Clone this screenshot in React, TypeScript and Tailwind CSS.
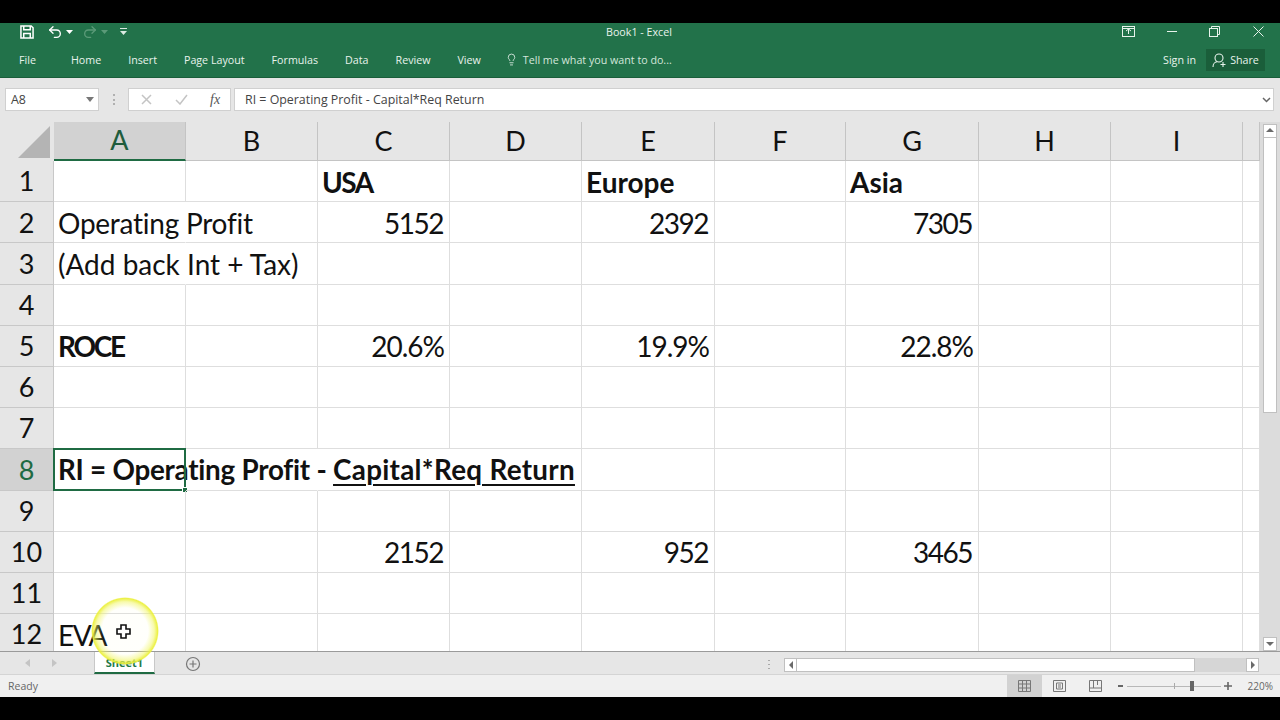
import { Lightbulb, Redo2, Undo2 } from 'lucide-react';

const colonne = [
  { nome: 'A', w: 'w-[132px]' },
  { nome: 'B', w: 'w-[132px]' },
  { nome: 'C', w: 'w-[132px]' },
  { nome: 'D', w: 'w-[132px]' },
  { nome: 'E', w: 'w-[133px]' },
  { nome: 'F', w: 'w-[131px]' },
  { nome: 'G', w: 'w-[133px]' },
  { nome: 'H', w: 'w-[132px]' },
  { nome: 'I', w: 'w-[132px]' },
  { nome: '', w: 'w-[17px]' },
];

type Cella = { t?: string; bold?: boolean; right?: boolean; cls?: string };

const num = 'tracking-[-1.5px] pr-[6px]';
const perc = 'tracking-[-1px] pr-[5px]';

const dati: Record<number, Record<number, Cella>> = {
  1: { 2: { t: 'USA', bold: true, cls: 'tracking-[-1.5px]' }, 4: { t: 'Europe', bold: true }, 6: { t: 'Asia', bold: true } },
  2: {
    0: { t: 'Operating Profit', cls: 'border-r-transparent tracking-[-0.25px] pl-[3px]' },
    2: { t: '5152', right: true, cls: num },
    4: { t: '2392', right: true, cls: num },
    6: { t: '7305', right: true, cls: num },
  },
  3: { 0: { t: '(Add back Int + Tax)', cls: 'border-r-transparent' } },
  5: {
    0: { t: 'ROCE', bold: true, cls: 'tracking-[-2.3px]' },
    2: { t: '20.6%', right: true, cls: perc },
    4: { t: '19.9%', right: true, cls: perc },
    6: { t: '22.8%', right: true, cls: perc },
  },
  8: { 1: { cls: 'border-r-transparent' }, 2: { cls: 'border-r-transparent' } },
  10: {
    2: { t: '2152', right: true, cls: num },
    4: { t: '952', right: true, cls: num },
    6: { t: '3465', right: true, cls: num },
  },
  12: { 0: { t: 'EVA', cls: 'tracking-[-1.5px] pl-[3px]' } },
};

const righe = [1, 2, 3, 4, 5, 6, 7, 8, 9, 10, 11, 12];
const tabs = ['Home', 'Insert', 'Page Layout', 'Formulas', 'Data', 'Review', 'View'];

const Triangolo = ({ dir }: { dir: 'up' | 'down' | 'left' | 'right' }) => {
  const punti = { up: '1,6 5,2 9,6', down: '1,3 5,7 9,3', left: '7,1 3,5 7,9', right: '3,1 7,5 3,9' }[dir];
  return (
    <svg width="10" height="10" viewBox="0 0 10 10" fill="#6a6a6a">
      <polygon points={punti} />
    </svg>
  );
};

const BarraTitolo = () => (
  <div className="flex h-[22px] items-start text-[#e8f3ec]">
    <div className="flex w-[606px] items-center pl-[20px] pt-[1px]">
      <svg width="14" height="14" viewBox="0 0 15 15" fill="none" stroke="#fff" strokeWidth="1.6">
        <path d="M1 1h11l2 2v11H1z" />
        <path d="M4 1v4h7V1M4 14V9h7v5" />
      </svg>
      <Undo2 size={16} strokeWidth={2} className="ml-[13px] text-white" />
      <svg width="7" height="4" viewBox="0 0 7 4" fill="#fff" className="ml-[3px]"><polygon points="0,0 7,0 3.5,4" /></svg>
      <Redo2 size={16} strokeWidth={2} className="ml-[9px] text-[#5b9a78]" />
      <svg width="7" height="4" viewBox="0 0 7 4" fill="#5b9a78" className="ml-[3px]"><polygon points="0,0 7,0 3.5,4" /></svg>
      <svg width="7" height="8" viewBox="0 0 7 8" fill="#dcebe2" className="ml-[12px]">
        <rect x="0" y="0" width="7" height="1" />
        <polygon points="0,3 7,3 3.5,7" />
      </svg>
    </div>
    <span className="pt-[2px] text-[10.7px] leading-[15px]">Book1 - Excel</span>
    <div className="ml-auto flex items-center pt-[3px]">
      <svg width="13" height="11" viewBox="0 0 13 11" fill="none" stroke="#e8f3ec" strokeWidth="1" className="mr-[32px]">
        <rect x="0.5" y="0.5" width="12" height="10" />
        <path d="M0.5 2.5h12M4 5l2.5-2L9 5M6.5 3v5" />
      </svg>
      <div className="mr-[32px] h-[1px] w-[10px] bg-[#e8f3ec]" />
      <svg width="11" height="11" viewBox="0 0 11 11" fill="none" stroke="#e8f3ec" strokeWidth="1" className="mr-[33px]">
        <rect x="0.5" y="2.5" width="8" height="8" />
        <path d="M2.5 2.5v-2h8v8h-2" />
      </svg>
      <svg width="11" height="11" viewBox="0 0 11 11" stroke="#e8f3ec" strokeWidth="1" className="mr-[16px]">
        <path d="M0.5 0.5l10 10M10.5 0.5l-10 10" />
      </svg>
    </div>
  </div>
);

const BarraTab = () => (
  <div className="flex h-[33px] items-start text-[10.7px] text-[#e8f3ec]">
    <span className="ml-[19px] mt-[7px] leading-[17px]">File</span>
    <div className="ml-[35px] mt-[7px] flex gap-[27px] leading-[16px]">
      {tabs.map(t => <span key={t}>{t}</span>)}
    </div>
    <Lightbulb size={13} strokeWidth={1.5} className="ml-[24px] mt-[8px]" />
    <span className="ml-[5px] mt-[7px] leading-[16px] text-[#d3e6db]">Tell me what you want to do...</span>
    <div className="ml-auto mr-[15px] mt-[4px] flex items-center">
      <span className="mr-[10px] leading-[16px]">Sign in</span>
      <div className="flex h-[22px] w-[59px] items-center justify-center gap-[3px] bg-[#1a5e3a]">
        <svg width="15" height="15" viewBox="0 0 15 15" fill="none" stroke="#e8f3ec" strokeWidth="1.1">
          <circle cx="7" cy="5" r="4" />
          <path d="M1 14c0-3 2-5 4-5.2M11 9v5M8.5 11.5h5" />
        </svg>
        <span>Share</span>
      </div>
    </div>
  </div>
);

const BarraFormula = () => (
  <div className="flex h-[44px] items-start bg-[#e6e6e6] pt-[10px] text-[12.4px] text-[#444]">
    <div className="ml-[5px] flex h-[23px] w-[94px] items-center justify-between border border-[#d0d0d0] bg-white pl-[5px] pr-[4px]">
      <span className="mt-[2px]">A8</span>
      <svg width="8" height="5" viewBox="0 0 8 5" fill="#777"><polygon points="0,0 8,0 4,5" /></svg>
    </div>
    <div className="ml-[14px] mt-[6px] flex h-[11px] w-[2px] flex-col justify-between">
      <div className="h-[2px] bg-[#b0b0b0]" />
      <div className="h-[2px] bg-[#b0b0b0]" />
      <div className="h-[2px] bg-[#b0b0b0]" />
    </div>
    <div className="ml-[13px] flex h-[23px] w-[103px] items-center border border-[#d0d0d0] bg-white pl-[12px]">
      <svg width="11" height="11" viewBox="0 0 11 11" stroke="#c4c4c4" strokeWidth="1.5"><path d="M1 1l9 9M10 1l-9 9" /></svg>
      <svg width="13" height="11" viewBox="0 0 13 11" fill="none" stroke="#c4c4c4" strokeWidth="1.5" className="ml-[23px]"><path d="M1 6l4 4 7-9" /></svg>
      <span className="ml-[22px] font-['Liberation_Serif',serif] text-[14px] italic text-[#555]">fx</span>
    </div>
    <div className="ml-[3px] flex h-[23px] w-[1040px] items-center justify-between border border-[#d0d0d0] bg-white pl-[10px] pr-[2px]">
      <span className="mt-[2px]">RI = Operating Profit - Capital*Req Return</span>
      <svg width="9" height="6" viewBox="0 0 9 6" fill="none" stroke="#666" strokeWidth="1.5"><path d="M1 1l3.5 3.5L8 1" /></svg>
    </div>
  </div>
);

const Intestazione = () => (
  <div className="flex h-[39px] font-['Lato',sans-serif] text-[27px] text-[#111]">
    <div className="flex w-[54px] shrink-0 items-end">
      <svg width="50" height="35" viewBox="0 0 50 35" fill="#b4b4b4" className="mb-[3px]"><polygon points="18,35 50,3 50,35" /></svg>
    </div>
    {colonne.map(c => (
      <div
        key={c.nome || 'fine'}
        className={`flex shrink-0 items-center justify-center border-r border-[#c4c4c4] ${c.w} ${c.nome === 'A' ? 'border-b-2 border-b-[#1f6b43] bg-[#d2d2d2] text-[#1f5c3c]' : 'border-b border-b-[#c4c4c4]'}`}
      >
        {c.nome}
      </div>
    ))}
  </div>
);

const Riga = ({ n }: { n: number }) => {
  const sel = n === 8;
  return (
    <div className="flex h-[41.2px] shrink-0">
      <div className={`flex w-[54px] shrink-0 items-center justify-center border-b border-r border-[#c8c8c8] pt-[1px] text-[27px] ${sel ? 'bg-[#d2d2d2] text-[#1f6b43]' : 'bg-[#e6e6e6] text-[#111]'}`}>
        {n}
      </div>
      {colonne.map((c, i) => {
        const cella = dati[n]?.[i];
        return (
          <div
            key={i}
            className={`relative flex shrink-0 items-center whitespace-nowrap border-b border-r border-[#dedede] bg-transparent pl-[4px] pr-[4px] pt-[1px] ${c.w} ${cella?.right ? 'justify-end' : ''} ${cella?.bold ? 'font-bold' : ''} ${cella?.cls ?? ''}`}
          >
            {cella?.t}
            {sel && i === 0 && (
              <>
                <span className="whitespace-pre text-[27.8px] font-bold">
                  <span className="tracking-[-0.25px]">RI = Operating Profit - </span>
                  <span className="tracking-[0.3px] underline decoration-2 underline-offset-4">Capital*Req Return</span>
                </span>
                <div className="absolute inset-[-1px] border-2 border-[#1f6b43]" />
                <div className="absolute bottom-[-3px] right-[-3px] h-[6px] w-[6px] border border-white bg-[#1f6b43]" />
              </>
            )}
          </div>
        );
      })}
    </div>
  );
};

const ScrollVerticale = () => (
  <div className="flex w-[20px] shrink-0 flex-col items-center bg-[#dcdcdc] pt-[2px]">
    <div className="flex h-[14px] w-[14px] items-center justify-center border border-[#c0c0c0] bg-white"><Triangolo dir="up" /></div>
    <div className="h-[275px] w-[14px] border-x border-b border-[#c0c0c0] bg-white" />
    <div className="mt-auto flex h-[14px] w-[14px] items-center justify-center border border-[#c0c0c0] bg-white"><Triangolo dir="down" /></div>
  </div>
);

const BarraFogli = () => (
  <div className="flex h-[22px] items-start bg-[#e6e6e6]">
    <div className="flex w-[94px] items-center gap-[22px] pl-[25px] pt-[7px]">
      <svg width="5" height="8" viewBox="0 0 5 8" fill="#c4c4c4"><polygon points="5,0 0,4 5,8" /></svg>
      <svg width="5" height="8" viewBox="0 0 5 8" fill="#c4c4c4"><polygon points="0,0 5,4 0,8" /></svg>
    </div>
    <div className="flex h-[22px] w-[61px] items-center justify-center border-x border-b-2 border-x-[#c8c8c8] border-b-[#1f6b43] bg-white pt-[2px] text-[11px] font-bold text-[#1f7a49]">
      Sheet1
    </div>
    <svg width="16" height="16" viewBox="0 0 16 16" fill="none" stroke="#777" strokeWidth="1.2" className="ml-[30px] mt-[4px]">
      <circle cx="8" cy="8" r="6.5" />
      <path d="M8 4.5v7M4.5 8h7" />
    </svg>
    <div className="ml-[567px] mt-[8px] flex h-[9px] w-[2px] flex-col justify-between">
      <div className="h-[1px] bg-[#aaa]" />
      <div className="h-[1px] bg-[#aaa]" />
      <div className="h-[1px] bg-[#aaa]" />
    </div>
    <div className="ml-[14px] mt-[6px] flex h-[14px] w-[475px] bg-[#d6d6d6]">
      <div className="flex w-[13px] items-center justify-center border border-[#c0c0c0] bg-white"><Triangolo dir="left" /></div>
      <div className="w-[398px] border-y border-r border-[#c0c0c0] bg-white" />
      <div className="flex-1" />
      <div className="flex w-[13px] items-center justify-center border border-[#c0c0c0] bg-white"><Triangolo dir="right" /></div>
    </div>
  </div>
);

const BarraStato = () => (
  <div className="flex h-[23px] items-center border-t border-[#d4d4d4] bg-[#f0f0f0] text-[10.5px] text-[#666]">
    <span className="ml-[8px] mt-[2px]">Ready</span>
    <div className="ml-auto flex h-full items-center">
      <div className="flex h-full w-[35px] items-center justify-center bg-[#d2d2d2]">
        <svg width="13" height="12" viewBox="0 0 13 12" fill="none" stroke="#777" strokeWidth="1">
          <path d="M.5.5h12v11H.5zM.5 4h12M.5 8h12M4.5.5v11M8.5.5v11" />
        </svg>
      </div>
      <svg width="13" height="12" viewBox="0 0 13 12" fill="none" stroke="#777" strokeWidth="1" className="ml-[11px]">
        <path d="M.5.5h12v11H.5zM3.5 3h6v6h-6zM5 5h3M5 7h3" />
      </svg>
      <svg width="13" height="12" viewBox="0 0 13 12" fill="none" stroke="#777" strokeWidth="1" className="ml-[23px]">
        <path d="M.5.5h12v11H.5zM.5 8h12M4.5.5V8M8.5.5V5" />
      </svg>
      <div className="ml-[16px] h-[2px] w-[5px] bg-[#666]" />
      <div className="relative ml-[4px] flex h-[1px] w-[94px] items-center bg-[#b8b8b8]">
        <div className="absolute left-[47px] h-[6px] w-[1px] bg-[#aaa]" />
        <div className="absolute left-[63px] h-[10px] w-[4px] bg-[#666]" />
      </div>
      <svg width="8" height="8" viewBox="0 0 8 8" stroke="#666" strokeWidth="1.6" className="ml-[3px]"><path d="M4 0v8M0 4h8" /></svg>
      <span className="ml-[16px] mr-[7px] text-[10px]">220%</span>
    </div>
  </div>
);

const App = () => {
  return (
    <div className="relative flex h-[720px] w-[1280px] flex-col overflow-hidden bg-black font-['Open_Sans',sans-serif]">
      <div className="mt-[23px] flex h-[674px] flex-col bg-[#e6e6e6]">
        <div className="h-[55px] shrink-0 border-b border-[#1a5e3a] bg-[#22724a]">
          <BarraTitolo />
          <BarraTab />
        </div>
        <BarraFormula />
        <div className="flex h-[530px] shrink-0 overflow-hidden border-b border-[#9a9a9a]">
          <div className="flex w-[1260px] shrink-0 flex-col overflow-hidden">
            <Intestazione />
            <div className="flex flex-col overflow-hidden bg-white font-['Lato',sans-serif] text-[28px] text-[#111]">
              {righe.map(n => <Riga key={n} n={n} />)}
            </div>
          </div>
          <ScrollVerticale />
        </div>
        <BarraFogli />
        <BarraStato />
      </div>

      {/* cerchio giallo del cursore */}
      <div className="absolute left-[91px] top-[597px] h-[68px] w-[68px] rounded-full bg-[radial-gradient(circle_closest-side,rgba(255,255,170,0.04)_68%,rgba(240,245,90,0.5)_86%,rgba(235,240,60,0.95)_96%,rgba(235,240,60,0)_100%)]" />
      <svg width="15" height="15" viewBox="0 0 15 15" fill="#fff" stroke="#111" strokeWidth="1.6" className="absolute left-[116px] top-[624px]">
        <path d="M5 1h5v4h4v5h-4v4H5v-4H1V5h4z" />
      </svg>
    </div>
  );
};

export default App;
